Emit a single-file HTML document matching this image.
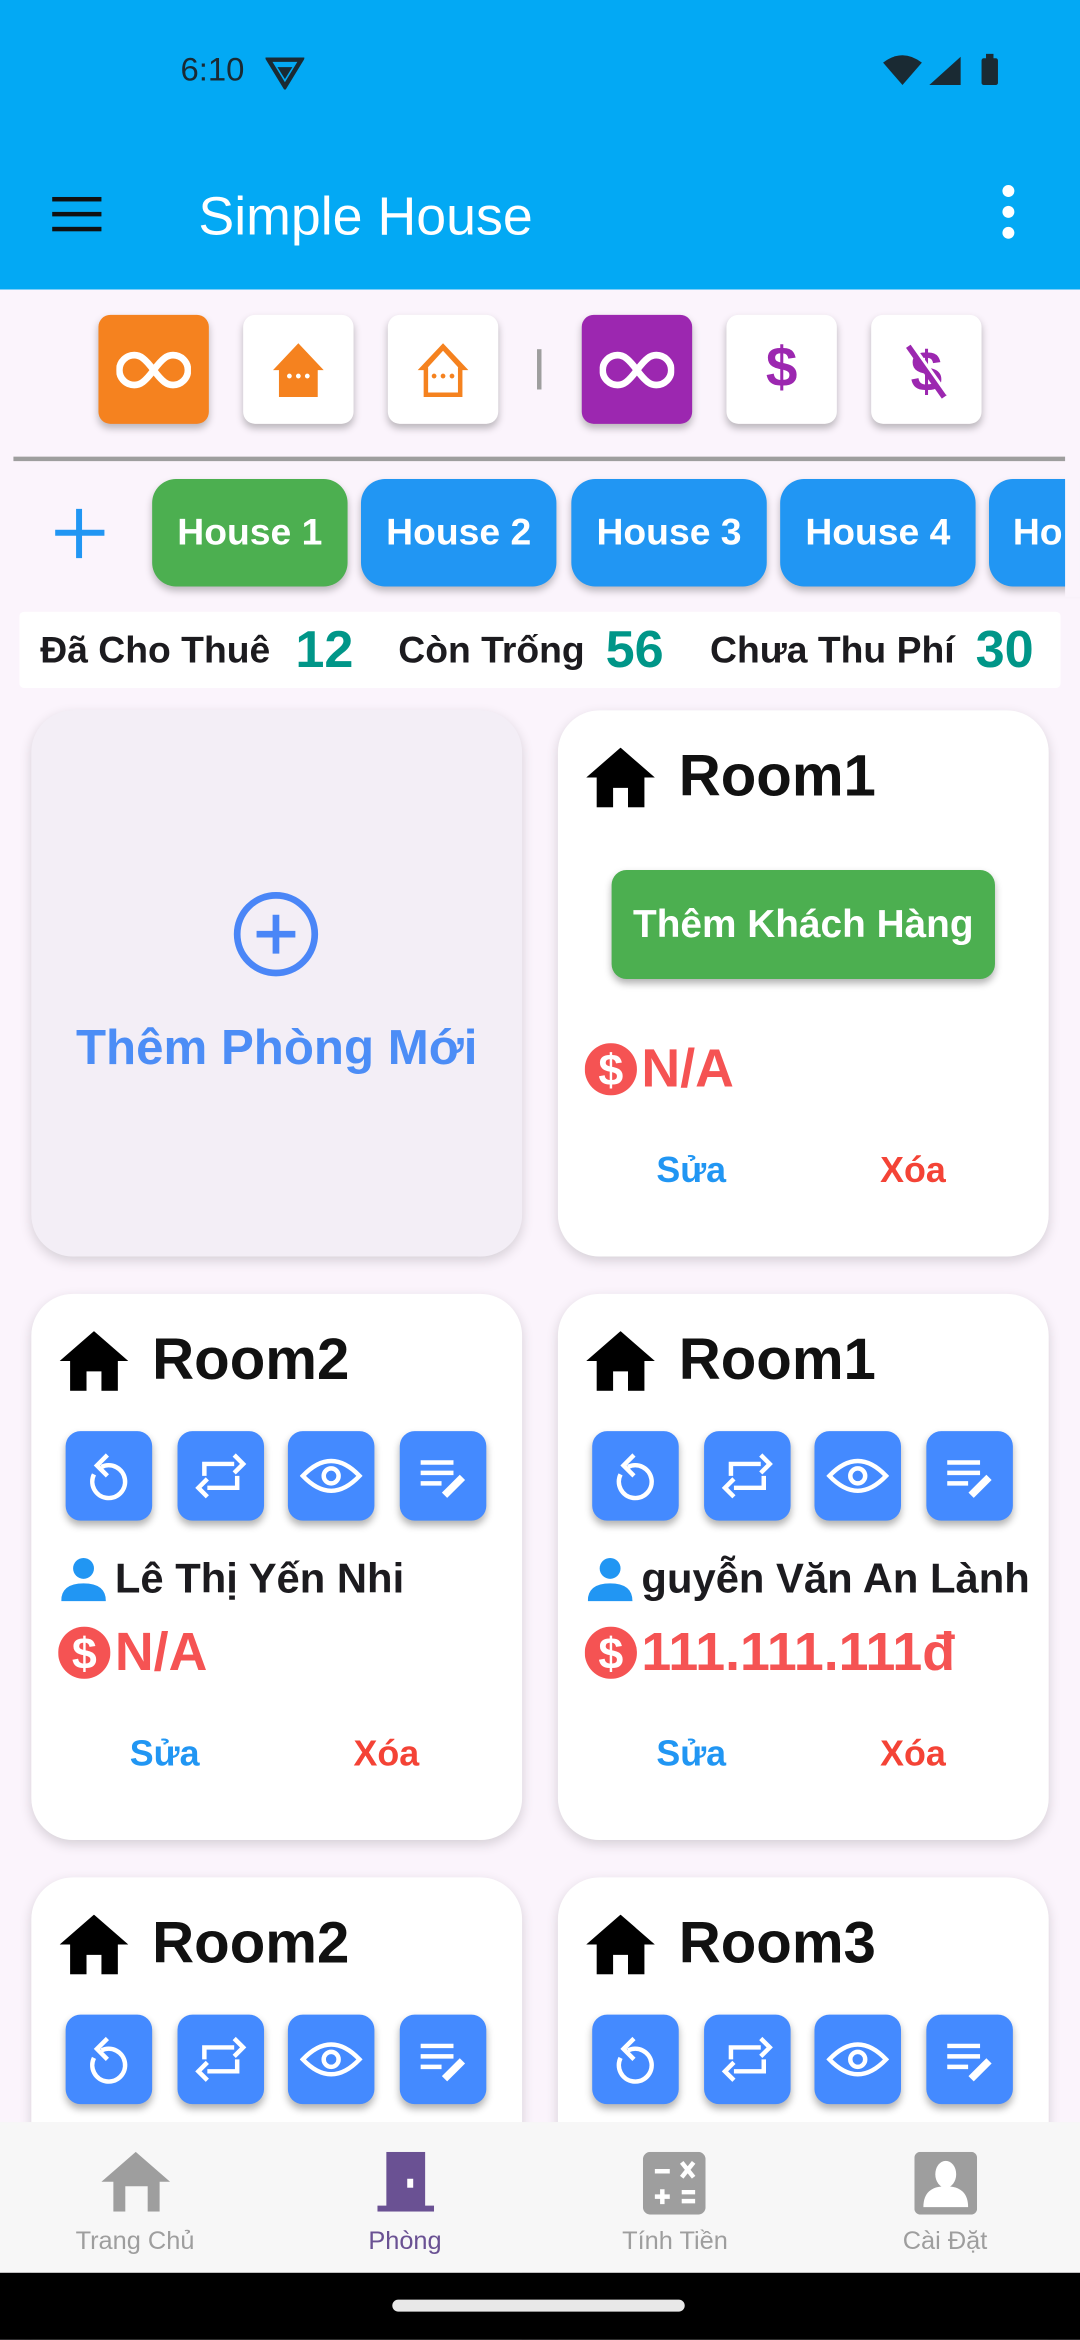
<!DOCTYPE html>
<html><head><meta charset="utf-8"><style>
*{margin:0;padding:0;box-sizing:border-box}
html,body{width:1080px;height:2340px;overflow:hidden;background:#FBF4FC}
#s{position:absolute;left:0;top:0;width:724px;height:1568px;transform:scale(1.49171,1.4923);transform-origin:0 0;font-family:"Liberation Sans","Noto Sans CJK SC",sans-serif;background:#FBF4FC;overflow:hidden}
.a{position:absolute}
.fb{position:absolute;top:211px;width:74px;height:73px;border-radius:8px;background:#fff;box-shadow:0 3px 5px rgba(0,0,0,.25);display:flex;align-items:center;justify-content:center}
.chip{position:absolute;top:321px;height:72px;width:131px;border-radius:16px;background:#2196F3;color:#fff;font-weight:bold;font-size:25px;display:flex;align-items:center;justify-content:center;box-shadow:0 3px 5px rgba(0,0,0,.25)}
.card{position:absolute;width:329px;height:366px;border-radius:28px;background:#fff;box-shadow:0 3px 8px rgba(0,0,0,.15)}
.title{position:absolute;left:19px;top:23px;display:flex;align-items:center;font-weight:bold;font-size:39px;color:#111}
.title svg{margin-right:16px}
.ab{position:absolute;top:92px;width:58px;height:60px;border-radius:10px;background:#448AFF;box-shadow:0 3px 5px rgba(0,0,0,.3);display:flex;align-items:center;justify-content:center}
.nm{position:absolute;left:20px;top:175px;font-weight:bold;font-size:28px;color:#1c1b1f;display:flex;align-items:center;white-space:nowrap;overflow:hidden;width:300px}
.pr{position:absolute;left:18px;top:219px;font-weight:bold;font-size:36px;color:#F55353;display:flex;align-items:center}
.sua{position:absolute;left:66px;top:295px;font-weight:bold;font-size:24px;color:#2196F3}
.xoa{position:absolute;left:216px;top:295px;font-weight:bold;font-size:24px;color:#F44336}
.nav{position:absolute;top:1422px;height:101px;width:181px;text-align:center}
.nav div{font-size:17px;color:#9E9E9E;position:absolute;top:70px;width:100%}
</style></head><body><div id="s">
<div class="a" style="left:0;top:0;width:724px;height:194px;background:#03A9F4"></div>
<div class="a" style="left:121px;top:34px;color:#1a2a33;font-size:22px">6:10</div>
<svg class="a" style="left:178px;top:38px" width="26" height="22" viewBox="0 0 26 22"><path d="M2 2h22L13 20z" fill="none" stroke="#1a2a33" stroke-width="3"/><path d="M8 7h10l-5 8z" fill="#1a2a33"/></svg>
<svg class="a" style="left:590px;top:36px" width="90" height="24" viewBox="0 0 90 24"><path d="M2 6Q15-4 28 6L15 21z" fill="#1a2a33"/><path d="M33 21L54 2v19z" fill="#1a2a33"/><rect x="68" y="3" width="11" height="18" rx="1.5" fill="#1a2a33"/><rect x="71" y="0" width="5" height="4" fill="#1a2a33"/></svg>
<div class="a" style="left:35px;top:132px;width:33px;height:3px;background:#111;box-shadow:0 10px 0 #111,0 20px 0 #111"></div>
<div class="a" style="left:133px;top:124px;color:#fff;font-size:36px">Simple House</div>
<div class="a" style="left:672px;top:124px;width:8px;height:8px;border-radius:4px;background:#fff;box-shadow:0 14px 0 #fff,0 28px 0 #fff"></div>

<div class="fb" style="left:66px;background:#F5821F"><svg width="50" height="30" viewBox="0 0 50 30"><path d="M25 15C19 7 16 5 12 5a10 10 0 0 0 0 20c4 0 7-2 13-10s9-10 13-10a10 10 0 0 1 0 20c-4 0-7-2-13-10" fill="none" stroke="#fff" stroke-width="4.5"/></svg></div>
<div class="fb" style="left:163px"><svg width="40" height="40" viewBox="0 0 40 40"><path d="M20 2L37 20h-4v18H7V20H3z" fill="#F5821F"/><circle cx="14" cy="24" r="1.6" fill="#fff"/><circle cx="20" cy="24" r="1.6" fill="#fff"/><circle cx="26" cy="24" r="1.6" fill="#fff"/></svg></div>
<div class="fb" style="left:260px"><svg width="40" height="40" viewBox="0 0 40 40"><path d="M20 2L37 20h-4v18H7V20H3z" fill="#F5821F"/><path d="M20 7L30 18v17H10V18z" fill="#fff"/><circle cx="14" cy="24" r="1.6" fill="#F5821F"/><circle cx="20" cy="24" r="1.6" fill="#F5821F"/><circle cx="26" cy="24" r="1.6" fill="#F5821F"/></svg></div>
<div class="a" style="left:360px;top:234px;width:3px;height:27px;background:#9E9E9E"></div>
<div class="fb" style="left:390px;background:#9C27B0"><svg width="50" height="30" viewBox="0 0 50 30"><path d="M25 15C19 7 16 5 12 5a10 10 0 0 0 0 20c4 0 7-2 13-10s9-10 13-10a10 10 0 0 1 0 20c-4 0-7-2-13-10" fill="none" stroke="#fff" stroke-width="4.5"/></svg></div>
<div class="fb" style="left:487px;color:#9C27B0;font-size:38px;font-weight:bold">$</div>
<div class="fb" style="left:584px"><svg width="36" height="44" viewBox="0 0 36 44"><text x="18" y="36" text-anchor="middle" font-size="38" font-weight="bold" fill="#9C27B0" font-family="Liberation Sans">$</text><path d="M6 6L30 40" stroke="#9C27B0" stroke-width="4"/><path d="M8 4L32 38" stroke="#fff" stroke-width="2"/></svg></div>

<div class="a" style="left:9px;top:306px;width:705px;height:3px;background:#9E9E9E"></div>
<div class="a" style="left:37px;top:355px;width:33px;height:4px;background:#2196F3"></div>
<div class="a" style="left:51px;top:341px;width:4px;height:33px;background:#2196F3"></div>
<div class="chip" style="left:102px;background:#4CAF50">House 1</div>
<div class="chip" style="left:242px">House 2</div>
<div class="chip" style="left:383px">House 3</div>
<div class="chip" style="left:523px">House 4</div>
<div class="chip" style="left:663px;justify-content:flex-start;padding-left:16px">Ho</div>
<div class="a" style="left:714px;top:315px;width:10px;height:85px;background:#FBF4FC"></div>

<div class="a" style="left:13px;top:410px;width:698px;height:51px;background:#fff;border-radius:3px;font-weight:bold;font-size:25px;color:#1c1b1f">
<span class="a" style="left:14px;top:12px">Đã Cho Thuê</span><span class="a" style="left:185px;top:6px;font-size:35px;color:#009688">12</span>
<span class="a" style="left:254px;top:12px">Còn Trống</span><span class="a" style="left:393px;top:6px;font-size:35px;color:#009688">56</span>
<span class="a" style="left:463px;top:12px">Chưa Thu Phí</span><span class="a" style="left:641px;top:6px;font-size:35px;color:#009688">30</span>
</div>

<div class="card" style="left:21px;top:476px;background:#F3EEF6">
<svg class="a" style="left:135px;top:121px" width="58" height="58" viewBox="0 0 58 58"><circle cx="29" cy="29" r="26" fill="none" stroke="#4A86F7" stroke-width="4.5"/><path d="M29 16v26M16 29h26" stroke="#4A86F7" stroke-width="4.5"/></svg>
<div class="a" style="left:0;width:329px;text-align:center;top:207px;font-weight:bold;font-size:33px;color:#4C8DF6;white-space:nowrap">Thêm Phòng Mới</div>
</div>

<div class="card" style="left:374px;top:476px">
<div class="title"><svg width="46" height="40" viewBox="0 0 46 40"><path d="M23 0L46 20h-7v20H28V27H18v13H7V20H0z" fill="#000"/></svg>Room1</div>
<div class="a" style="left:36px;top:107px;width:257px;height:73px;border-radius:10px;background:#4CAF50;color:#fff;font-weight:bold;font-size:26px;display:flex;align-items:center;justify-content:center;box-shadow:0 3px 5px rgba(0,0,0,.3);white-space:nowrap">Thêm Khách Hàng</div>
<div class="pr"><svg width="35" height="35" viewBox="0 0 35 35" style="margin-right:3px"><circle cx="17.5" cy="17.5" r="17.5" fill="#F55353"/><text x="17.5" y="28" text-anchor="middle" font-size="30" font-weight="bold" fill="#fff" font-family="Liberation Sans">$</text></svg>N/A</div>
<div class="sua">Sửa</div><div class="xoa">Xóa</div>
</div>

<div id="tpl"></div>

<div class="a" style="left:0;top:1422px;width:724px;height:101px;background:#F7F7F7"></div>
<div class="nav" style="left:0"><svg class="a" style="left:68px;top:20px" width="46" height="40" viewBox="0 0 46 40"><path d="M23 0L46 20h-7v20H31V23H16v17H8V20H0z" fill="#9E9E9E"/></svg><div>Trang Chủ</div></div>
<div class="nav" style="left:181px"><svg class="a" style="left:72px;top:20px" width="38" height="40" viewBox="0 0 38 40"><path d="M6 0h26v36h6v4H0v-4h6z" fill="#6A5193"/><rect x="20" y="18" width="4" height="6" fill="#fff"/></svg><div style="color:#6A5193">Phòng</div></div>
<div class="nav" style="left:362px"><svg class="a" style="left:69px;top:20px" width="42" height="42" viewBox="0 0 42 42"><rect width="42" height="42" rx="5" fill="#9E9E9E"/><path d="M8 13h10M26 7l8 10M34 7l-8 10M8 30h10M13 25v10M26 27h9M26 33h9" stroke="#fff" stroke-width="3"/></svg><div>Tính Tiền</div></div>
<div class="nav" style="left:543px"><svg class="a" style="left:70px;top:20px" width="42" height="42" viewBox="0 0 42 42"><rect width="42" height="42" rx="4" fill="#9E9E9E"/><ellipse cx="21" cy="15" rx="7" ry="9" fill="#fff"/><path d="M6 37q0-14 15-14t15 14z" fill="#fff"/></svg><div>Cài Đặt</div></div>
<div class="a" style="left:0;top:1523px;width:724px;height:45px;background:#000"></div>
<div class="a" style="left:263px;top:1541px;width:196px;height:8px;border-radius:4px;background:#e8e8e8"></div>
</div>
<script>
var cards=[[21,867,'Room2','Lê Thị Yến Nhi','N/A'],[374,867,'Room1','ɡuyễn Văn An Lành','111.111.111đ'],[21,1258,'Room2','',''],[374,1258,'Room3','','']];
var house='<svg width="46" height="40" viewBox="0 0 46 40"><path d="M23 0L46 20h-7v20H28V27H18v13H7V20H0z" fill="#000"/></svg>';
var ic=['<svg width="34" height="34" viewBox="0 0 34 34"><path d="M12 11a11 11 0 1 1-5 5" fill="none" stroke="#fff" stroke-width="3"/><path d="M16 3l-7 7 7 7" fill="none" stroke="#fff" stroke-width="3"/></svg>',
'<svg width="38" height="34" viewBox="0 0 38 34"><path d="M8 17V9h20M28 3l6 6-6 6M30 17v8H10M10 19l-6 6 6 6" fill="none" stroke="#fff" stroke-width="3"/></svg>',
'<svg width="42" height="30" viewBox="0 0 42 30"><path d="M2 15Q21-5 40 15Q21 35 2 15z" fill="none" stroke="#fff" stroke-width="3"/><circle cx="21" cy="15" r="5" fill="none" stroke="#fff" stroke-width="3"/></svg>',
'<svg width="38" height="34" viewBox="0 0 38 34"><path d="M4 8h22M4 15h22M4 22h14" stroke="#fff" stroke-width="3"/><path d="M20 30l12-12" stroke="#fff" stroke-width="5"/></svg>'];
var h='';
cards.forEach(function(c){
 h+='<div class="card" style="left:'+c[0]+'px;top:'+c[1]+'px"><div class="title">'+house+c[2]+'</div>';
 [23,98,172,247].forEach(function(x,i){h+='<div class="ab" style="left:'+x+'px">'+ic[i]+'</div>';});
 if(c[3]){h+='<div class="nm"><svg width="30" height="30" viewBox="0 0 30 30" style="margin-right:6px;flex:none"><circle cx="15" cy="8" r="7" fill="#2196F3"/><path d="M0 30q0-12 15-12t15 12z" fill="#2196F3"/></svg>'+c[3]+'</div>';
 h+='<div class="pr"><svg width="35" height="35" viewBox="0 0 35 35" style="margin-right:3px"><circle cx="17.5" cy="17.5" r="17.5" fill="#F55353"/><text x="17.5" y="28" text-anchor="middle" font-size="30" font-weight="bold" fill="#fff" font-family="Liberation Sans">$</text></svg>'+c[4]+'</div><div class="sua">Sửa</div><div class="xoa">Xóa</div>';}
 h+='</div>';
});
document.getElementById('tpl').outerHTML=h;
</script>
</body></html>
